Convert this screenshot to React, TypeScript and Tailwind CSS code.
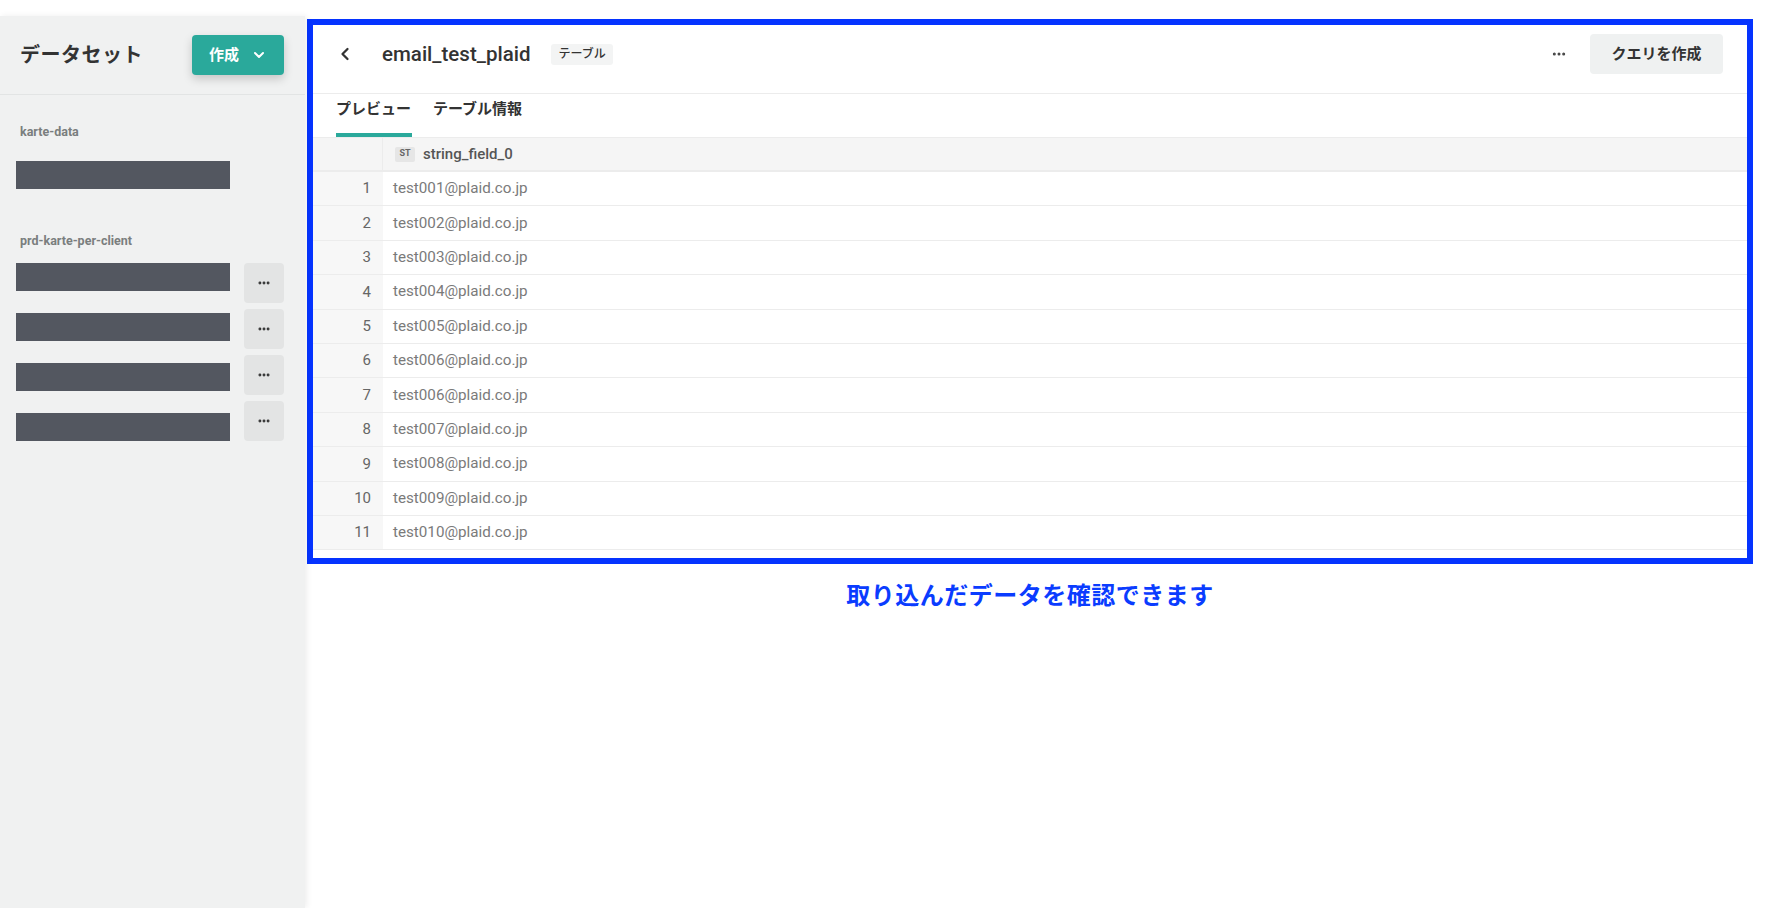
import { ChevronDown, ChevronLeft, MoreHorizontal } from "lucide-react";

const rows = [
  "test001@plaid.co.jp",
  "test002@plaid.co.jp",
  "test003@plaid.co.jp",
  "test004@plaid.co.jp",
  "test005@plaid.co.jp",
  "test006@plaid.co.jp",
  "test006@plaid.co.jp",
  "test007@plaid.co.jp",
  "test008@plaid.co.jp",
  "test009@plaid.co.jp",
  "test010@plaid.co.jp",
];

const font = "font-['Roboto','Noto_Sans_CJK_JP',sans-serif]";

const Sidebar = () => {
  return (
    <aside className="relative z-10 flex h-full w-[305px] shrink-0 flex-col bg-[#f0f1f1] shadow-[2px_0_6px_rgba(0,0,0,0.07)]">
      {/* ===== Header ===== */}
      <div className="flex h-[79px] items-center justify-between border-b border-[#e2e4e4] pl-5 pr-[21px]">
        <h2 className="text-[20px] font-bold tracking-[0.5px] text-[#333]">データセット</h2>
        <button className="flex h-10 w-[92px] items-center justify-center gap-3 rounded-[4px] bg-[#2aa99b] text-[15px] font-bold text-white shadow-[0_4px_10px_rgba(0,0,0,0.18)]">
          作成 <ChevronDown size={16} strokeWidth={3} />
        </button>
      </div>

      {/* ===== karte-data ===== */}
      <div className="pt-[31px] pl-4">
        <p className="pl-1 text-[12.5px] font-bold leading-none text-[#7a7e7e]">karte-data</p>
        <div className="mt-[22px] h-[28px] w-[214px] bg-[#535760]" />
      </div>

      {/* ===== prd-karte-per-client ===== */}
      <div className="pt-[46px] pl-4">
        <p className="pl-1 text-[12.5px] font-bold leading-none text-[#7a7e7e]">prd-karte-per-client</p>
        <div className="mt-[16px] flex gap-[14px]">
          <div className="flex flex-col gap-[22px]">
            {[0, 1, 2, 3].map((i) => (
              <div key={i} className="h-[28px] w-[214px] bg-[#535760]" />
            ))}
          </div>
          <div className="flex flex-col gap-[6px]">
            {[0, 1, 2, 3].map((i) => (
              <button
                key={i}
                className="flex h-10 w-10 items-center justify-center rounded-[4px] bg-[#e3e4e4] text-[#333]"
              >
                <MoreHorizontal size={14} strokeWidth={3} />
              </button>
            ))}
          </div>
        </div>
      </div>
    </aside>
  );
};

const TablePanel = () => {
  return (
    <div className="flex flex-col bg-white">
      {/* ===== Title bar ===== */}
      <div className="flex h-[69px] items-start border-b border-[#ececec] pt-[9px] pr-6">
        <div className="flex h-10 flex-1 items-center">
          <button className="ml-[20px] flex h-6 w-6 items-center justify-center text-[#333]">
            <ChevronLeft size={20} strokeWidth={2.75} />
          </button>
          <h1 className="ml-[25px] text-[20.5px] font-medium text-[#333]">email_test_plaid</h1>
          <span className="ml-[21px] flex h-[21px] items-center rounded-[3px] bg-[#f3f4f4] px-[7px] text-[12px] font-medium text-[#333]">
            テーブル
          </span>
          <div className="flex-1" />
          <MoreHorizontal size={16} strokeWidth={2.5} className="text-[#444]" />
          <button className="ml-[23px] flex h-10 w-[133px] items-center justify-center rounded-[4px] bg-[#eff1f1] text-[15px] font-bold text-[#333]">
            クエリを作成
          </button>
        </div>
      </div>

      {/* ===== Tabs ===== */}
      <div className="flex h-[43px] items-end gap-[21px] pl-[23px]">
        <div className="flex h-full flex-col justify-between">
          <span className="pt-[4px] text-[15px] font-bold text-[#333]">プレビュー</span>
          <span className="h-1 w-[76px] bg-[#2aa99b]" />
        </div>
        <div className="flex h-full flex-col">
          <span className="pt-[4px] text-[15px] font-bold text-[#333]">テーブル情報</span>
        </div>
      </div>

      {/* ===== Preview table ===== */}
      <div className="border-t border-[#ececec]">
        <div className="flex h-[34px] border-b-2 border-[#ececec] bg-[#f5f5f5]">
          <div className="w-[70px] border-r border-[#ececec]" />
          <div className="flex items-center pl-3">
            <span className="flex h-[15px] w-5 items-center justify-center rounded-[2px] bg-[#e6e6e6] text-[9px] font-bold text-[#666]">
              ST
            </span>
            <span className="ml-2 text-[15px] font-medium text-[#555]">string_field_0</span>
          </div>
        </div>
        {rows.map((email, i) => (
          <div key={i} className="flex h-[34.4px] border-b border-[#ececec]">
            <div className="flex w-[70px] items-center justify-end bg-[#f7f7f7] pr-3 text-[15px] text-[#666]">
              {i + 1}
            </div>
            <div className="flex items-center pl-[10px] text-[15.2px] text-[#7a7a7a]">{email}</div>
          </div>
        ))}
      </div>
      <div className="h-2" />
    </div>
  );
};

export default function App() {
  return (
    <div className={`flex h-[908px] w-[1784px] overflow-hidden bg-white pt-4 ${font}`}>
      <Sidebar />
      <main className="flex flex-1 flex-col pt-[3px] pl-[2px] pr-[31px]">
        <div className="border-[6px] border-[#0533ff]">
          <TablePanel />
        </div>
        <p className="mt-[14px] text-center text-[24px] font-bold tracking-[0.5px] text-[#0a3cff]">
          取り込んだデータを確認できます
        </p>
      </main>
    </div>
  );
}
